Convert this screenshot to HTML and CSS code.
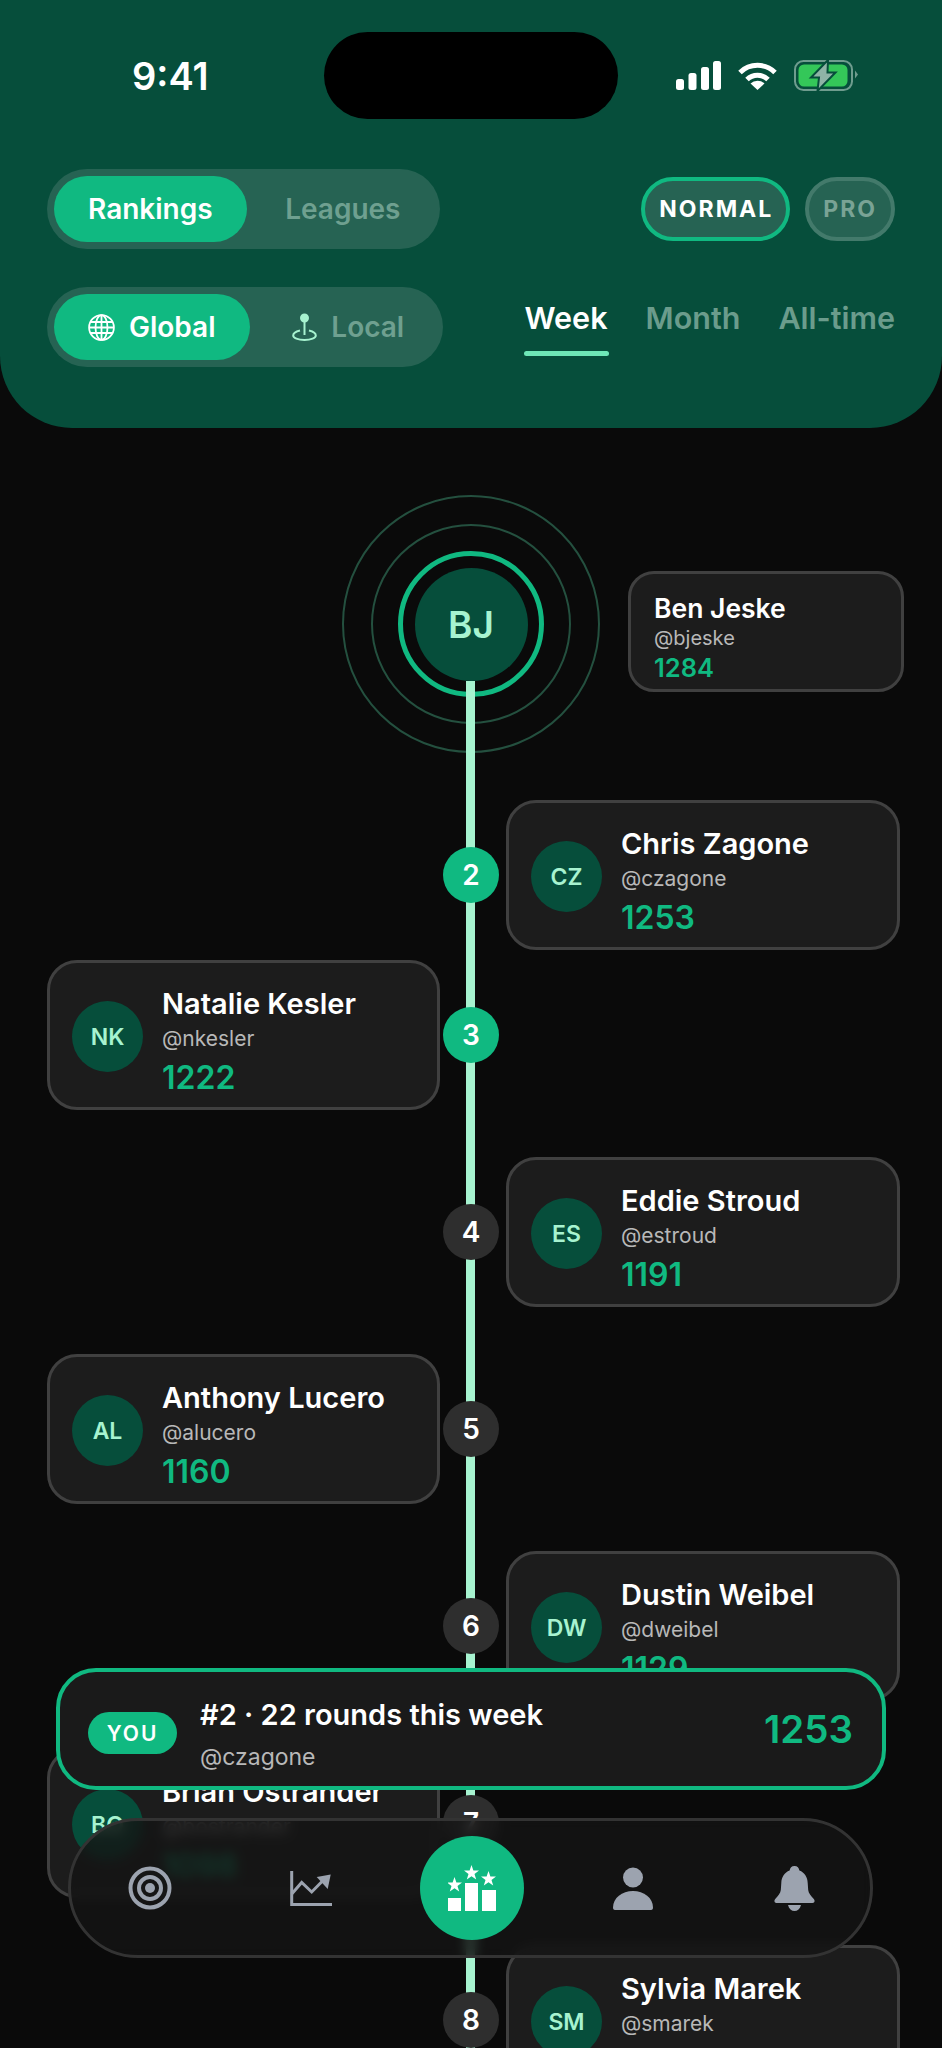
FILE: index.html
```html
<!DOCTYPE html>
<html>
<head>
    <title>Rankings</title>
    <link rel="stylesheet" href="styles.css">
</head>
<body>
    <div class="screen">
        <div class="header">
            <div class="status-bar">
                <span class="clock">9:41</span>
                <div class="island"></div>
                <div class="status-icons">
                    <svg width="45" height="29" viewBox="0 0 45 29" fill="#fff"><rect x="0" y="18" width="8" height="11" rx="2.5"/><rect x="12.5" y="12" width="8" height="17" rx="2.5"/><rect x="25" y="6" width="8" height="23" rx="2.5"/><rect x="37" y="0" width="8" height="29" rx="2.5"/></svg>
                    <svg width="39" height="29" viewBox="0 0 39 29" fill="none" stroke="#fff" stroke-width="5"><path d="M2 11.5A25 25 0 0 1 37 11.5"/><path d="M9 18.5A15 15 0 0 1 30 18.5"/><path d="M19.5 29L12.5 22.5A10 10 0 0 1 26.5 22.5Z" fill="#fff" stroke="none"/></svg>
                    <svg width="64" height="31" viewBox="0 0 64 31"><rect x="1" y="1" width="57" height="29" rx="8.500" fill="none" stroke="#6f9c8e" stroke-width="2"/><rect x="4.500" y="4.500" width="49" height="22" rx="5.500" fill="#34c759"/><path d="M61 10.500L64 14.500L61 18.500Z" fill="#6f9c8e"/><path d="M34 0L17 17.500H25L23.500 31L41.500 12.500H33.500Z" fill="#8fb3a6" stroke="#064e3b" stroke-width="2"/></svg>
                </div>
            </div>
            <div class="header-row">
                <div class="seg seg-rank">
                    <div class="seg-btn active">Rankings</div>
                    <div class="seg-btn">Leagues</div>
                </div>
                <div class="modes">
                    <div class="mode active">NORMAL</div>
                    <div class="mode">PRO</div>
                </div>
            </div>
            <div class="header-row second">
                <div class="seg seg-scope">
                    <div class="seg-btn active">
                        <svg width="27" height="27" viewBox="0 0 27 27" fill="none" stroke="#fff" stroke-width="1.8"><circle cx="13.5" cy="13.5" r="12.4"/><ellipse cx="13.5" cy="13.5" rx="6" ry="12.4"/><path d="M13.5 1V26M2.5 8H24.500M1.100 13.500H25.900M2.500 19H24.500"/></svg>
                        Global
                    </div>
                    <div class="seg-btn">
                        <svg width="25" height="28" viewBox="0 0 25 28" fill="none" stroke="#a7f3d0" stroke-width="2"><circle cx="12.500" cy="5" r="3.500" fill="#a7f3d0"/><path d="M12.500 8V22"/><path d="M8 17.500C4 18.500 1.200 20.300 1.200 22.500C1.200 25 6 27 12.500 27C19 27 23.800 25 23.800 22.500C23.800 20.300 21 18.500 17 17.500"/></svg>
                        <span>Local</span>
                    </div>
                </div>
                <div class="tabs">
                    <div class="tab active">Week</div>
                    <div class="tab">Month</div>
                    <div class="tab">All-time</div>
                </div>
            </div>
        </div>

        <div class="timeline">
            <div class="line"></div>

            <div class="leader">
                <div class="ring-outer">
                    <div class="ring-mid">
                        <div class="ring-main">
                            <div class="leader-avatar">BJ</div>
                        </div>
                    </div>
                </div>
                <div class="leader-card">
                    <div class="leader-name">Ben Jeske</div>
                    <div class="leader-handle">@bjeske</div>
                    <div class="leader-score">1284</div>
                </div>
            </div>

            <div class="row">
                <div></div>
                <div class="rank green">2</div>
                <div class="card right">
                    <div class="avatar">CZ</div>
                    <div class="info">
                        <div class="name">Chris Zagone</div>
                        <div class="handle">@czagone</div>
                        <div class="score">1253</div>
                    </div>
                </div>
            </div>

            <div class="row tight">
                <div class="card">
                    <div class="avatar">NK</div>
                    <div class="info">
                        <div class="name">Natalie Kesler</div>
                        <div class="handle">@nkesler</div>
                        <div class="score">1222</div>
                    </div>
                </div>
                <div class="rank green">3</div>
                <div></div>
            </div>

            <div class="row">
                <div></div>
                <div class="rank">4</div>
                <div class="card right">
                    <div class="avatar">ES</div>
                    <div class="info">
                        <div class="name">Eddie Stroud</div>
                        <div class="handle">@estroud</div>
                        <div class="score">1191</div>
                    </div>
                </div>
            </div>

            <div class="row">
                <div class="card">
                    <div class="avatar">AL</div>
                    <div class="info">
                        <div class="name">Anthony Lucero</div>
                        <div class="handle">@alucero</div>
                        <div class="score">1160</div>
                    </div>
                </div>
                <div class="rank">5</div>
                <div></div>
            </div>

            <div class="row">
                <div></div>
                <div class="rank">6</div>
                <div class="card right">
                    <div class="avatar">DW</div>
                    <div class="info">
                        <div class="name">Dustin Weibel</div>
                        <div class="handle">@dweibel</div>
                        <div class="score">1129</div>
                    </div>
                </div>
            </div>

            <div class="row">
                <div class="card">
                    <div class="avatar">BO</div>
                    <div class="info">
                        <div class="name">Brian Ostrander</div>
                        <div class="handle">@bostrander</div>
                        <div class="score">1098</div>
                    </div>
                </div>
                <div class="rank">7</div>
                <div></div>
            </div>

            <div class="row">
                <div></div>
                <div class="rank">8</div>
                <div class="card right">
                    <div class="avatar">SM</div>
                    <div class="info no-score">
                        <div class="name">Sylvia Marek</div>
                        <div class="handle">@smarek</div>
                    </div>
                </div>
            </div>
        </div>

        <div class="you-card">
            <div class="you-pill">YOU</div>
            <div class="you-info">
                <div class="you-title">#2 · 22 rounds this week</div>
                <div class="you-handle">@czagone</div>
            </div>
            <div class="you-score">1253</div>
        </div>

        <div class="nav">
            <div class="nav-item">
                <svg width="44" height="44" viewBox="0 0 44 44" fill="none" stroke="#9ca3af" stroke-width="4"><circle cx="22" cy="22" r="19.500"/><circle cx="22" cy="22" r="11"/><circle cx="22" cy="22" r="5" fill="#9ca3af" stroke="none"/></svg>
            </div>
            <div class="nav-item">
                <svg width="42" height="35" viewBox="0 0 42 35" fill="none" stroke="#9ca3af" stroke-width="3"><path d="M1.700 0V33.500H42"/><path d="M1.700 23L11.700 11.500L21.700 21L33 9.500"/><path d="M26.700 6L40.700 3.500L37.700 18Z" fill="#9ca3af" stroke="none"/></svg>
            </div>
            <div class="nav-item">
                <div class="nav-active">
                    <svg width="49" height="46" viewBox="0 0 49 46" fill="#fff"><rect x="0" y="33" width="13" height="13"/><rect x="17" y="18" width="13" height="28"/><rect x="34" y="25" width="14" height="21"/><path d="M6.500 12L8.400 17.500H14L9.500 21L11.200 26.500L6.500 23.200L1.800 26.500L3.500 21L-1 17.500H4.600Z"/><path d="M23.500 0L25.400 5.500H31L26.500 9L28.200 14.500L23.500 11.200L18.800 14.500L20.500 9L16 5.500H21.600Z"/><path d="M40.500 6L42.400 11.500H48L43.500 15L45.200 20.500L40.500 17.200L35.800 20.500L37.500 15L33 11.500H38.600Z"/></svg>
                </div>
            </div>
            <div class="nav-item">
                <svg width="40" height="43" viewBox="0 0 40 43" fill="#9ca3af"><circle cx="20" cy="10.500" r="10"/><path d="M2 43C0.500 43 0 42 0 40.500C0 31 9 24 20 24C31 24 40 31 40 40.500C40 42 39.500 43 38 43Z"/></svg>
            </div>
            <div class="nav-item">
                <svg width="41" height="45" viewBox="0 0 41 45" fill="#9ca3af"><path d="M20.500 0C17.500 0 16 2 15.600 4.500C10.500 6.500 7.500 11 7.300 17L6.800 24C6.600 27 4 30 1.200 33C-0.300 35 0.500 37 2.500 37H38.500C40.500 37 41.300 35 39.800 33C37 30 34.400 27 34.200 24L33.700 17C33.500 11 30.500 6.500 25.400 4.500C25 2 23.500 0 20.500 0Z"/><path d="M14 39H27C26 43 23.500 45 20.500 45C17.500 45 15 43 14 39Z"/></svg>
            </div>
        </div>
    </div>
</body>
</html>
```

FILE: styles.css
```css
body {
    margin: 0;
    padding: 0;
    background: #0a0a0a;
    font-family: Inter, "Noto Sans", sans-serif;
    color: white;
}

.screen {
    position: relative;
    width: 942px;
    height: 2048px;
    overflow: hidden;
}

/* header */
.header {
    background: #064e3b;
    border-radius: 0 0 72px 72px;
    padding: 32px 47px 61px;
}

.status-bar {
    display: flex;
    align-items: center;
    height: 87px;
    margin-bottom: 50px;
}

.clock {
    width: 192px;
    padding-left: 85px;
    box-sizing: border-box;
    font-size: 38px;
    font-weight: 600;
}

.island {
    width: 294px;
    height: 87px;
    background: black;
    border-radius: 44px;
    margin-left: 85px;
}

.status-icons {
    display: flex;
    align-items: center;
    gap: 17px;
    margin-left: 58px;
    margin-right: -17px;
}

.header-row {
    display: flex;
    justify-content: space-between;
    align-items: center;
}

.header-row.second {
    margin-top: 38px;
}

.seg {
    display: flex;
    height: 80px;
    box-sizing: border-box;
    padding: 7px;
    background: #266353;
    border-radius: 40px;
}

.seg-rank {
    width: 393px;
}

.seg-rank .seg-btn {
    padding-left: 6px;
}

.seg-scope {
    width: 396px;
}

.seg-scope .seg-btn {
    padding-left: 11px;
}

.seg-btn {
    display: flex;
    flex: 1;
    align-items: center;
    justify-content: center;
    gap: 14px;
    border-radius: 33px;
    font-size: 28px;
    font-weight: 600;
    color: #6fa090;
}

.seg-rank .seg-btn.active,
.seg-scope .seg-btn.active {
    flex: none;
    padding: 0 34px;
    background: #10b981;
    color: white;
}

.modes {
    display: flex;
    gap: 15px;
}

.mode {
    display: flex;
    align-items: center;
    height: 64px;
    box-sizing: border-box;
    padding: 0 14px;
    background: #266353;
    border: 4px solid #437a6b;
    border-radius: 32px;
    font-size: 23px;
    font-weight: 700;
    letter-spacing: 2px;
    color: #7aa395;
}

.mode.active {
    padding: 0 13px 0 14px;
    border-color: #10b981;
    color: white;
}

.tabs {
    display: flex;
    gap: 38px;
    margin-bottom: 19px;
}

.tab {
    position: relative;
    font-size: 30.5px;
    font-weight: 600;
    color: #6b9c8c;
}

.tab.active {
    color: white;
}

.tab.active::after {
    content: "";
    position: absolute;
    left: -1px;
    right: -1px;
    bottom: -20px;
    height: 5px;
    border-radius: 3px;
    background: #6ee7b7;
}

/* timeline */
.timeline {
    position: relative;
    padding-top: 67px;
}

.line {
    position: absolute;
    top: 253px;
    bottom: 0;
    left: 466px;
    width: 9px;
    background: #a7f3d0;
}

.leader {
    display: flex;
    align-items: flex-start;
    padding-left: 342px;
}

.ring-outer,
.ring-mid {
    display: flex;
    align-items: center;
    justify-content: center;
    box-sizing: border-box;
    border-radius: 50%;
    border: 2px solid #24503f;
}

.ring-outer {
    width: 258px;
    height: 258px;
}

.ring-mid {
    width: 200px;
    height: 200px;
}

.ring-main {
    display: flex;
    align-items: center;
    justify-content: center;
    width: 146px;
    height: 146px;
    box-sizing: border-box;
    border-radius: 50%;
    border: 5px solid #10b981;
}

.leader-avatar {
    position: relative;
    z-index: 1;
    display: flex;
    align-items: center;
    justify-content: center;
    width: 113px;
    height: 113px;
    border-radius: 50%;
    background: #064e3b;
    color: #a7f3d0;
    font-size: 37px;
    font-weight: 600;
}

.leader-card {
    width: 276px;
    height: 121px;
    box-sizing: border-box;
    margin: 76px 0 0 28px;
    padding: 19px 23px;
    background: #1c1c1c;
    border: 3px solid #404040;
    border-radius: 26px;
}

.leader-name {
    font-size: 26.5px;
    font-weight: 600;
    line-height: 30px;
}

.leader-handle {
    font-size: 20px;
    line-height: 30px;
    color: #b8b8b8;
}

.leader-score {
    font-size: 25.5px;
    font-weight: 600;
    line-height: 30px;
    color: #10b981;
}

.row {
    position: relative;
    display: grid;
    grid-template-columns: 396px 56px 443px;
    align-items: center;
    padding-left: 47px;
    margin-top: 47px;
    min-height: 150px;
}

.row.tight {
    margin-top: 10px;
}

.rank {
    position: relative;
    display: flex;
    align-items: center;
    justify-content: center;
    width: 56px;
    height: 56px;
    border-radius: 50%;
    background: #2e2e2e;
    font-size: 28px;
    font-weight: 600;
}

.rank.green {
    background: #10b981;
}

.card {
    display: flex;
    align-items: center;
    gap: 19px;
    width: 393px;
    height: 150px;
    box-sizing: border-box;
    padding: 0 22px;
    background: #1c1c1c;
    border: 3px solid #404040;
    border-radius: 30px;
}

.card.right {
    margin-left: 7px;
    width: 394px;
}

.avatar {
    display: flex;
    flex: none;
    align-items: center;
    justify-content: center;
    width: 71px;
    height: 71px;
    margin-top: 3px;
    border-radius: 50%;
    background: #064e3b;
    color: #a7f3d0;
    font-size: 23px;
    font-weight: 600;
}

.info {
    padding-top: 13px;
}

.info.no-score {
    padding-bottom: 41px;
}

.name {
    font-size: 29px;
    font-weight: 600;
    line-height: 35px;
}

.handle {
    font-size: 21px;
    line-height: 36px;
    color: #b8b8b8;
}

.score {
    font-size: 32px;
    font-weight: 600;
    line-height: 41px;
    color: #10b981;
}

/* overlays */
.you-card {
    position: absolute;
    left: 56px;
    right: 56px;
    bottom: 258px;
    display: flex;
    align-items: center;
    gap: 23px;
    height: 122px;
    box-sizing: border-box;
    padding: 0 29px 0 28px;
    background: #1a1a1a;
    border: 4px solid #10b981;
    border-radius: 40px;
}

.you-pill {
    display: flex;
    align-items: center;
    justify-content: center;
    width: 89px;
    height: 42px;
    margin-top: 8px;
    border-radius: 21px;
    background: #10b981;
    font-size: 21px;
    font-weight: 600;
    letter-spacing: 2px;
}

.you-info {
    padding-top: 13px;
}

.you-title {
    font-size: 29px;
    font-weight: 600;
    line-height: 42px;
}

.you-handle {
    font-size: 23px;
    line-height: 42px;
    color: #b8b8b8;
}

.you-score {
    margin-left: auto;
    font-size: 38.5px;
    font-weight: 600;
    color: #10b981;
}

.nav {
    position: absolute;
    left: 68px;
    bottom: 90px;
    display: grid;
    grid-template-columns: repeat(5, 161px);
    justify-content: center;
    align-items: center;
    width: 805px;
    height: 140px;
    box-sizing: border-box;
    padding-left: 3px;
    background: rgba(20, 20, 20, 0.8);
    backdrop-filter: blur(6px);
    border: 3px solid #333;
    border-radius: 70px;
}

.nav-item {
    display: flex;
    align-items: center;
    justify-content: center;
}

.nav-active {
    display: flex;
    align-items: center;
    justify-content: center;
    width: 104px;
    height: 104px;
    border-radius: 50%;
    background: #10b981;
}
```
